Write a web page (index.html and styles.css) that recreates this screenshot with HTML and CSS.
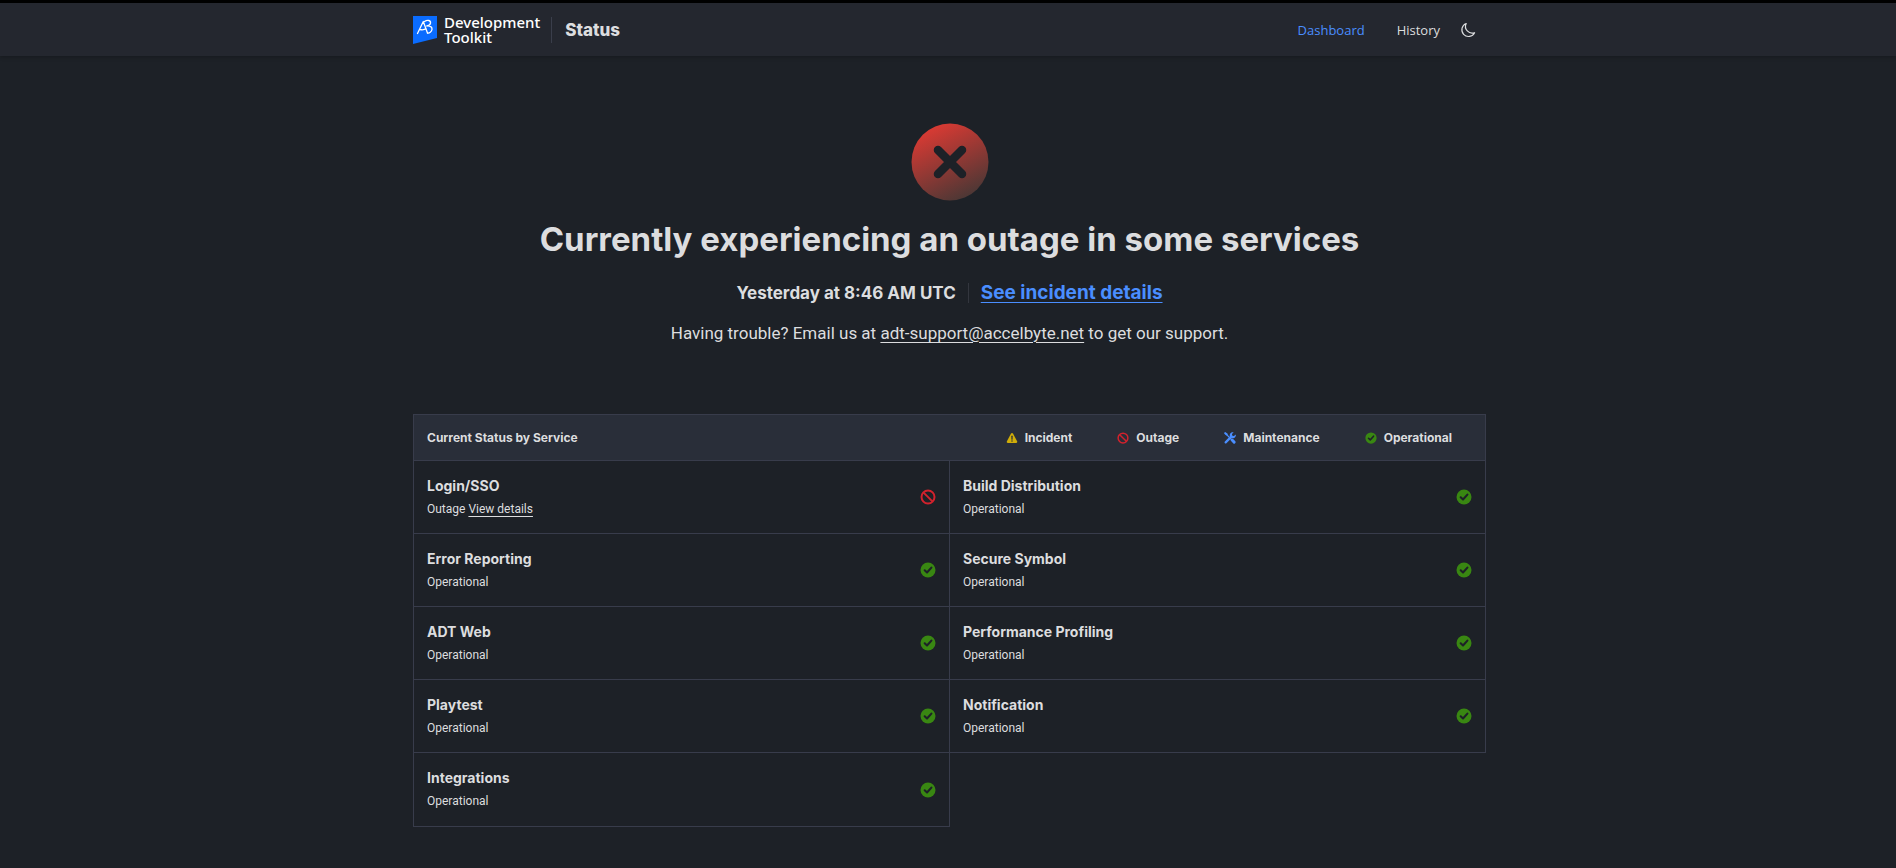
FILE: index.html
```html
<!DOCTYPE html>
<html lang="en">
<head>
<meta charset="utf-8">
<title>Development Toolkit Status</title>
<link rel="stylesheet" href="styles.css">
</head>
<body>
<svg class="sprite" aria-hidden="true">
  <symbol id="ok" viewBox="0 0 16 16"><path fill="#398712" d="M8 .5a7.5 7.5 0 1 0 0 15 7.5 7.5 0 0 0 0-15z"/><path d="M4.7 8.3 7 10.5l4.4-4.9" fill="none" stroke="#1d2127" stroke-width="2.1" stroke-linecap="round" stroke-linejoin="round"/></symbol>
  <symbol id="outage" viewBox="0 0 16 16"><g fill="none" stroke="#d2222d" stroke-width="2"><circle cx="8" cy="8" r="6.5"/><path d="m3.6 3.6 8.8 8.8"/></g></symbol>
  <symbol id="incident" viewBox="0 0 16 16"><path fill="#d0ad09" d="M8 1.2c.6 0 1 .3 1.3.8l5.500 10.300c.6 1.200-.1 2.200-1.300 2.200h-11c-1.200 0-1.900-1-1.300-2.200l5.500-10.300c.3-.5.700-.8 1.300-.8z"/><path d="M8 5.500v4" stroke="#292e39" stroke-width="1.700" stroke-linecap="round"/><circle cx="8" cy="12.100" r="1" fill="#292e39"/></symbol>
  <symbol id="maintenance" viewBox="0 0 16 16"><g fill="none" stroke="#4a8eff" stroke-linecap="round"><path d="m2.500 2.500 7 7" stroke-width="1.800"/><path d="m1.700 1.600 1.900 1.600" stroke-width="2.800"/><path d="m10.800 10.800 2.700 2.700" stroke-width="3.800"/><path d="m2.200 13.800 7.600-7.600" stroke-width="3"/></g><path fill="#4a8eff" d="m15.600 3.200-2.300 2.200-2.200-.4-.5-2.300L12.800.5C10.900-.1 8.900.7 8 2.500c-.8 1.700-.4 3.700 1 4.900 1.400 1.100 3.500 1.200 5 .1s2.100-2.700 1.600-4.300z"/></symbol>
</svg>
<header class="topbar">
  <div class="container topbar-inner">
    <a class="brand" href="#">
      <svg class="brand-mark" viewBox="0 0 24 28" aria-hidden="true"><path fill="#0a6cff" d="M0 0h24v22L0 28z"/><g fill="none" stroke="#fff" stroke-width="1.300" stroke-linecap="round" stroke-linejoin="round"><path d="M4.500 17.500 10.300 5.500l4.200 11.500M7 13.500c2.500.6 4.500.3 6-1"/><path d="M11.500 5.500c3-2 6.500-1.200 6 1.600-.2 1.600-1.800 2.600-3.700 2.900 3.300-.3 5.600.8 5.200 3.500-.4 2.500-2.700 3.800-4.500 3.500"/></g></svg>
      <span class="brand-name">Development<br>Toolkit</span>
    </a>
    <span class="product">Status</span>
    <nav class="nav">
      <a class="active" href="#">Dashboard</a>
      <a href="#">History</a>
      <button class="theme" aria-label="Toggle theme"><svg viewBox="0 0 16 16"><path fill="none" stroke="#dcdddf" stroke-width="1.200" stroke-linejoin="round" d="M6.200 1.500a6.700 6.700 0 1 0 8.400 9.200A6.700 6.700 0 0 1 6.200 1.500z"/></svg></button>
    </nav>
  </div>
</header>
<main class="container">
  <section class="hero">
    <svg class="hero-icon" viewBox="0 0 78 78" aria-hidden="true"><defs><linearGradient id="g" x1=".25" y1="0" x2=".75" y2="1"><stop stop-color="#e03a33"/><stop offset="1" stop-color="#453735"/></linearGradient></defs><circle cx="39" cy="39" r="38.500" fill="url(#g)"/><path d="m27 27 24 24M51 27 27 51" stroke="#1d2127" stroke-width="8.500" stroke-linecap="round"/></svg>
    <h1>Currently experiencing an outage in some services</h1>
    <div class="when"><span class="time">Yesterday at 8:46 AM UTC</span><a class="details" href="#">See incident details</a></div>
    <p class="help">Having trouble? Email us at <a href="#">adt-support@accelbyte.net</a> to get our support.</p>
  </section>
  <section class="board">
    <div class="board-head">
      <h2>Current Status by Service</h2>
      <ul class="legend">
        <li><svg><use href="#incident"/></svg>Incident</li>
        <li><svg><use href="#outage"/></svg>Outage</li>
        <li><svg><use href="#maintenance"/></svg>Maintenance</li>
        <li><svg><use href="#ok"/></svg>Operational</li>
      </ul>
    </div>
    <div class="services">
      <article class="service"><div><h3>Login/SSO</h3><p>Outage <a href="#">View details</a></p></div><svg><use href="#outage"/></svg></article>
      <article class="service"><div><h3>Build Distribution</h3><p>Operational</p></div><svg><use href="#ok"/></svg></article>
      <article class="service"><div><h3>Error Reporting</h3><p>Operational</p></div><svg><use href="#ok"/></svg></article>
      <article class="service"><div><h3>Secure Symbol</h3><p>Operational</p></div><svg><use href="#ok"/></svg></article>
      <article class="service"><div><h3>ADT Web</h3><p>Operational</p></div><svg><use href="#ok"/></svg></article>
      <article class="service"><div><h3>Performance Profiling</h3><p>Operational</p></div><svg><use href="#ok"/></svg></article>
      <article class="service"><div><h3>Playtest</h3><p>Operational</p></div><svg><use href="#ok"/></svg></article>
      <article class="service"><div><h3>Notification</h3><p>Operational</p></div><svg><use href="#ok"/></svg></article>
      <article class="service"><div><h3>Integrations</h3><p>Operational</p></div><svg><use href="#ok"/></svg></article>
    </div>
  </section>
</main>
</body>
</html>
```
FILE: styles.css
```css
* { box-sizing: border-box; }
body {
  margin: 0;
  padding-left: 3px;
  border-top: 3px solid #000;
  background: #1d2127;
  color: #dcdddf;
  font-family: Inter, "Open Sans", sans-serif;
}
h1, h2, h3, p, ul { margin: 0; padding: 0; }
.sprite { position: absolute; width: 0; height: 0; }
.container { max-width: 1073px; margin: 0 auto; }
.topbar {
  margin-left: -3px;
  padding-left: 3px;
  background: #24272f;
  box-shadow: 0 1px 4px rgba(0, 0, 0, .25);
}
.topbar-inner { display: flex; align-items: center; height: 53px; }
.brand { display: flex; align-items: center; gap: 7px; color: #fff; text-decoration: none; }
.brand-mark { width: 24px; height: 28px; }
.brand-name { font: 500 15px/15px "Noto Sans", sans-serif; }
.product {
  margin-left: 11px;
  padding-left: 13px;
  border-left: 1px solid #3a3e4b;
  font-size: 17px;
  line-height: 26px;
  font-weight: 800;
}
.nav {
  display: flex;
  align-items: center;
  gap: 32px;
  margin-left: auto;
  padding-right: 10px;
  font-family: "Open Sans", sans-serif;
  font-size: 13px;
  font-weight: 500;
}
.nav a { color: #dcdddf; text-decoration: none; }
.nav .active { color: #4a8eff; font-weight: 400; }
.theme { margin-left: -12px; padding: 0; border: 0; background: none; display: flex; }
.theme svg { width: 16px; height: 16px; }
.hero { display: flex; flex-direction: column; align-items: center; padding-top: 67px; text-align: center; }
.hero-icon { width: 78px; height: 78px; }
h1 { margin-top: 16px; font-size: 33px; line-height: 44px; font-weight: 700; }
.when { display: flex; align-items: center; margin-top: 20px; line-height: 24px; font-weight: 700; }
.time { padding-right: 12px; border-right: 1px solid #33363e; font-size: 17px; line-height: 20px; }
.details { margin-left: 12px; font-size: 19px; color: #4a8eff; }
a { text-underline-offset: 3px; text-decoration-thickness: 1px; }
.help { margin-top: 16px; font-family: Roboto, sans-serif; font-size: 17px; line-height: 24px; }
.help a, .service a { color: inherit; }
.board { margin-top: 69px; }
.board-head {
  display: flex;
  align-items: center;
  justify-content: space-between;
  height: 47px;
  padding: 0 33px 0 13px;
  border: 1px solid #383c4b;
  background: #292e39;
}
h2, .legend { font-size: 12px; font-weight: 700; line-height: 16px; }
.legend { display: flex; gap: 45px; list-style: none; }
.legend li { display: flex; align-items: center; gap: 7px; }
.legend svg { width: 12px; height: 12px; }
.services { display: grid; grid-template-columns: 1fr 1fr; padding-left: 1px; }
.service {
  display: flex;
  align-items: center;
  justify-content: space-between;
  height: 73px;
  padding: 0 13px;
  border: solid #383c4b;
  border-width: 0 1px 1px 0;
}
.service:nth-child(odd) { box-shadow: -1px 0 #383c4b; }
.service:last-child { height: 74px; }
.service svg { width: 16px; height: 16px; }
h3 { font-size: 14px; line-height: 20px; font-weight: 700; }
.service p { margin-top: 3px; font-family: Roboto, sans-serif; font-size: 12px; line-height: 20px; }
```
